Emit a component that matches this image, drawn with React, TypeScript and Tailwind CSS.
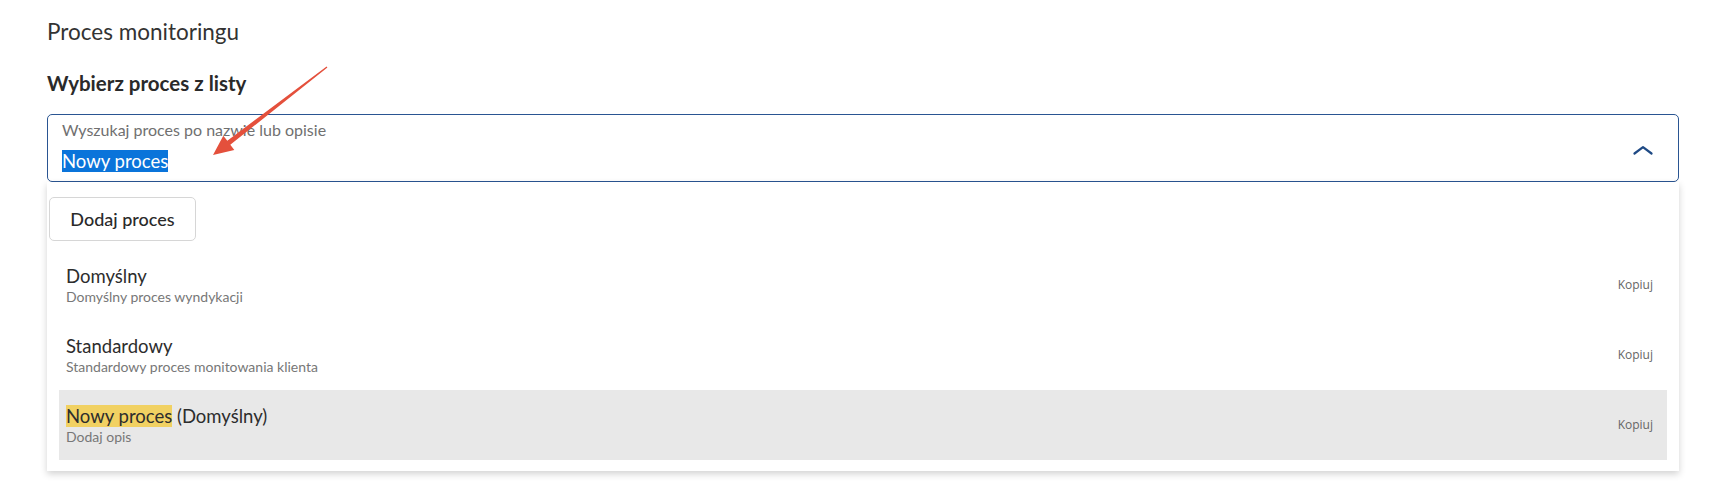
import React from 'react';

type Proces = {
  name: string;
  desc: string;
  active?: boolean;
};

const procesy: Proces[] = [
  { name: 'Domyślny', desc: 'Domyślny proces wyndykacji' },
  { name: 'Standardowy', desc: 'Standardowy proces monitowania klienta' },
  { name: 'Nowy proces', desc: 'Dodaj opis', active: true },
];

function ChevronUp() {
  return (
    <svg width="20" height="9" viewBox="0 0 20 9" fill="none" className="shrink-0">
      <polyline
        points="1.5,7.5 10,1.2 18.5,7.5"
        stroke="#1f4a85"
        strokeWidth="2.2"
        strokeLinecap="round"
        strokeLinejoin="round"
      />
    </svg>
  );
}

function Arrow() {
  return (
    <svg className="pointer-events-none absolute left-0 top-0" width="400" height="200" viewBox="0 0 400 200">
      <polygon
        points="213,155 234.3,149.9 230.3,144.8 327.4,67.5 326.6,66.5 227.3,140.8 223.3,135.7"
        fill="#e4503c"
      />
    </svg>
  );
}

function ProcesItem({ p }: { p: Proces }) {
  return (
    <div
      className={`flex h-[70px] items-center justify-between pl-[7px] pr-[14px] ${
        p.active ? 'bg-[#e8e8e8]' : ''
      }`}
    >
      <div className="flex flex-col">
        <div className="text-[18.5px] leading-[22px] text-[#2d2d2d]">
          {p.active ? (
            <>
              <span className="bg-[#f1d162]">{p.name}</span> (Domyślny)
            </>
          ) : (
            p.name
          )}
        </div>
        <div className="mt-[1px] text-[14px] leading-[18px] text-[#777]">{p.desc}</div>
      </div>
      <span className="font-['Open_Sans'] text-[12px] text-[#666]">Kopiuj</span>
    </div>
  );
}

export default function App() {
  return (
    <div className="relative min-h-screen bg-white font-['Lato',sans-serif] text-[#333]">
      <div className="pl-[47px] pr-[45px] pt-[18px]">
        <h2 className="text-[22.5px] leading-[28px] text-[#333]">Proces monitoringu</h2>
        <h3 className="mt-[25px] text-[20.5px] font-bold leading-[24px] text-[#2a2a2a]">
          Wybierz proces z listy
        </h3>

        <div className="mt-[19px]">
          <div className="flex h-[68px] items-center justify-between rounded-[5px] border-[1.5px] border-[#2a5592] pl-[14px] pr-[25px]">
            <div className="flex flex-col self-start pt-[5px]">
              <span className="text-[16px] leading-[19px] text-[#707070]">
                Wyszukaj proces po nazwie lub opisie
              </span>
              <span className="mt-[11px] text-[18.5px] leading-[22px]">
                <span className="bg-[#0a74da] text-white">Nowy proces</span>
              </span>
            </div>
            <div className="pt-[4px]">
              <ChevronUp />
            </div>
          </div>

          <div className="bg-white pb-[11px] pt-[15px] shadow-[0_3px_7px_rgba(0,0,0,0.18)]">
            <div className="pl-[2px]">
              <button className="h-[44px] w-[147px] rounded-[5px] border border-[#d6d6d6] bg-white text-[18px] font-medium text-[#2a2a2a]">
                Dodaj proces
              </button>
            </div>
            <div className="mt-[9px] px-[12px]">
              {procesy.map((p) => (
                <ProcesItem key={p.name} p={p} />
              ))}
            </div>
          </div>
        </div>
      </div>
      <Arrow />
    </div>
  );
}
